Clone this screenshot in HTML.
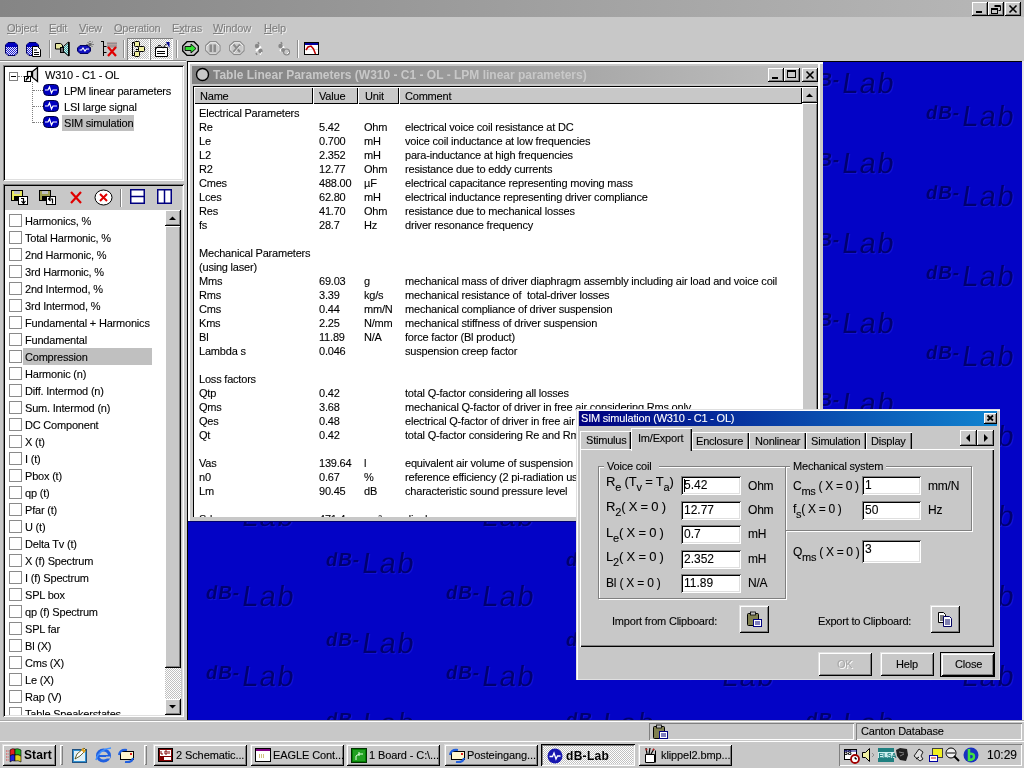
<!DOCTYPE html>
<html><head><meta charset="utf-8">
<style>
*{margin:0;padding:0;box-sizing:border-box}
html,body{width:1024px;height:768px;overflow:hidden;background:#c8c8c8;font-family:"Liberation Sans",sans-serif;font-size:11px;color:#000;letter-spacing:-0.2px}
.a{position:absolute}
.t{position:absolute;white-space:pre;line-height:14px;-webkit-text-stroke:0.1px currentColor}
.raised{background:#c0c0c0;border-top:1px solid #fff;border-left:1px solid #fff;border-right:1px solid #000;border-bottom:1px solid #000;box-shadow:inset -1px -1px 0 #808080}
.raised2{background:#c8c8c8;box-shadow:inset 1px 1px 0 #dfdfdf,inset -1px -1px 0 #000,inset 2px 2px 0 #fff,inset -2px -2px 0 #808080}
.sunk{box-shadow:inset 1px 1px 0 #808080,inset -1px -1px 0 #fff,inset 2px 2px 0 #000,inset -2px -2px 0 #dfdfdf}
.thin{box-shadow:inset 1px 1px 0 #808080,inset -1px -1px 0 #fff}
.tb{position:absolute;width:16px;height:14px;background:#c8c8c8;box-shadow:inset -1px -1px 0 #000,inset 1px 1px 0 #fff,inset -2px -2px 0 #808080}
.chk{position:absolute;width:13px;height:13px;border:1px solid #8a8a8a;background:#fff}
.dith{background-color:#fff;background-image:linear-gradient(45deg,#c0c0c0 25%,transparent 25%,transparent 75%,#c0c0c0 75%),linear-gradient(45deg,#c0c0c0 25%,transparent 25%,transparent 75%,#c0c0c0 75%);background-size:2px 2px;background-position:0 0,1px 1px}
</style></head><body><div id="root" style="position:absolute;left:0;top:0;width:1024px;height:768px;overflow:hidden;will-change:transform">

<!-- app title bar -->
<div class="a" style="left:0;top:0;width:1024px;height:17px;background:linear-gradient(90deg,#858585,#b8b8b8)"></div>

<!-- menu bar -->
<div class="a" id="menubar" style="left:0;top:17px;width:1024px;height:22px;background:#c8c8c8"></div>

<!-- toolbar -->
<div class="a" id="toolbar" style="left:0;top:39px;width:1024px;height:21px;background:#c8c8c8"></div>

<div class="t" style="left:7px;top:21px;color:#808080;text-shadow:1px 1px 0 #f0f0f0"><u>O</u>bject</div>
<div class="t" style="left:49px;top:21px;color:#808080;text-shadow:1px 1px 0 #f0f0f0"><u>E</u>dit</div>
<div class="t" style="left:79px;top:21px;color:#808080;text-shadow:1px 1px 0 #f0f0f0"><u>V</u>iew</div>
<div class="t" style="left:114px;top:21px;color:#808080;text-shadow:1px 1px 0 #f0f0f0"><u>O</u>peration</div>
<div class="t" style="left:172px;top:21px;color:#808080;text-shadow:1px 1px 0 #f0f0f0">E<u>x</u>tras</div>
<div class="t" style="left:213px;top:21px;color:#808080;text-shadow:1px 1px 0 #f0f0f0"><u>W</u>indow</div>
<div class="t" style="left:264px;top:21px;color:#808080;text-shadow:1px 1px 0 #f0f0f0"><u>H</u>elp</div>
<!-- app title buttons -->
<div class="tb" style="left:972px;top:2px;width:16px;height:14px"></div>
<div class="a" style="left:976px;top:11px;width:6px;height:2px;background:#000"></div>
<div class="tb" style="left:988px;top:2px;width:16px;height:14px"></div>
<svg class="a" style="left:988px;top:2px" width="16" height="14"><path d="M6.5 3.5h6v5h-2M6.5 4.5h6" stroke="#000" fill="none"/><rect x="3.5" y="6.5" width="6" height="5" fill="none" stroke="#000"/><path d="M3.5 7.5h6" stroke="#000"/></svg>
<div class="tb" style="left:1005px;top:2px;width:16px;height:14px"></div>
<svg class="a" style="left:1005px;top:2px" width="16" height="14"><path d="M4.5 3.5l7 7M11.5 3.5l-7 7" stroke="#000" stroke-width="1.6"/></svg>

<svg width="0" height="0" style="position:absolute"><defs>
<pattern id="dbl" patternUnits="userSpaceOnUse" width="2" height="2"><rect width="2" height="2" fill="#2020d0"/><rect width="1" height="1" fill="#e8e8ff"/><rect x="1" y="1" width="1" height="1" fill="#e8e8ff"/></pattern>
<pattern id="dtl" patternUnits="userSpaceOnUse" width="2" height="2"><rect width="2" height="2" fill="#40a0a0"/><rect width="1" height="1" fill="#d0f0f0"/><rect x="1" y="1" width="1" height="1" fill="#d0f0f0"/></pattern>
</defs></svg>
<svg class="a" style="left:5px;top:42px" width="13" height="14" viewBox="0 0 13 14"><path d="M3 0.5h7l2.5 2.5v8L10 13.5H3L0.5 11V3z" fill="url(#dbl)" stroke="#000060"/><path d="M3 1h7l2 2v2H1V3z" fill="#0000c0"/></svg>
<svg class="a" style="left:26px;top:42px" width="16" height="15" viewBox="0 0 16 15"><path d="M3 0.5h7l2.5 2.5v8L10 13.5H3L0.5 11V3z" fill="url(#dbl)" stroke="#000060"/><path d="M3 1h7l2 2v2H1V3z" fill="#0000c0"/><path d="M6.5 4.5h5l3 3v7h-8z" fill="#fff" stroke="#000"/><path d="M8 8h3M8 10.5h5M8 12.5h5" stroke="#000"/></svg>
<div class="a" style="left:49px;top:40px;width:1px;height:18px;background:#909090"></div><div class="a" style="left:50px;top:40px;width:1px;height:18px;background:#fff"></div>
<svg class="a" style="left:55px;top:41px" width="16" height="16" viewBox="0 0 16 16"><path d="M0.5 2.5h5l2 1.5v4h-7z" fill="#e8e8a0" stroke="#000"/><rect x="5.5" y="6.5" width="3" height="5" fill="#707070" stroke="#000"/><path d="M8.5 5.5l5-4.5v14l-5-4.5z" fill="url(#dtl)" stroke="#000"/><path d="M14 1v14" stroke="#000" stroke-width="1.5"/></svg>
<svg class="a" style="left:77px;top:41px" width="18" height="14" viewBox="0 0 18 14"><path d="M3 4.5h8l2.5 2.5v3L11 12.5H3L0.5 10V7z" fill="#1010c0" stroke="#000060"/><path d="M2.5 9h2l1.5-2 2 3 1.5-2h2.5" stroke="#fff" fill="none" stroke-width="1.1"/><path d="M13 0v7M9.5 3.5h7M10.5 1l5 5M15.5 1l-5 5" stroke="#000" stroke-width="0.7" stroke-dasharray="1 1"/></svg>
<svg class="a" style="left:101px;top:41px" width="17" height="16" viewBox="0 0 17 16"><path d="M2.5 0v15M0 0.5h3M2.5 5.5h3M2.5 11.5h3" stroke="#000"/><rect x="6" y="1" width="10" height="6" fill="#b8a0a0"/><path d="M6 2.5h10M6 5h10" stroke="#909090"/><path d="M7 6l8 9M15 6l-8 9" stroke="#e00000" stroke-width="2.2"/></svg>
<div class="a" style="left:123px;top:40px;width:1px;height:18px;background:#909090"></div><div class="a" style="left:124px;top:40px;width:1px;height:18px;background:#fff"></div>
<div class="a dith" style="left:127px;top:38px;width:23px;height:22px;box-shadow:inset 1px 1px 0 #808080,inset -1px -1px 0 #fff"></div>
<svg class="a" style="left:131px;top:41px" width="16" height="16" viewBox="0 0 16 16"><path d="M1.5 1v14M1.5 1.5h2M1.5 14.5h2M5 8.5h3" stroke="#000"/><rect x="3.5" y="0.5" width="5" height="5" rx="1" fill="#f0f0a0" stroke="#000"/><rect x="7.5" y="5.5" width="6" height="5" rx="1" fill="#f0f0a0" stroke="#000"/><rect x="3.5" y="10.5" width="5" height="5" rx="1" fill="#f0f0a0" stroke="#000"/></svg>
<div class="a dith" style="left:150px;top:38px;width:23px;height:22px;box-shadow:inset 1px 1px 0 #808080,inset -1px -1px 0 #fff"></div>
<svg class="a" style="left:154px;top:41px" width="16" height="16" viewBox="0 0 16 16"><path d="M1.5 6.5h12v9h-12z" fill="#fff" stroke="#000"/><path d="M3 10.5h8M3 12.5h8" stroke="#000"/><path d="M1.5 8l4-4 3 3 4-4" stroke="#000" fill="none" stroke-width="1.3" stroke-dasharray="1.3 0.7"/><path d="M12 1h3.5v6z" fill="#000090"/></svg>
<div class="a" style="left:176px;top:40px;width:1px;height:18px;background:#909090"></div><div class="a" style="left:177px;top:40px;width:1px;height:18px;background:#fff"></div>
<svg class="a" style="left:182px;top:41px" width="17" height="15" viewBox="0 0 17 15"><path d="M5 0.7h7l4.3 4.3v5L12 14.3H5L0.7 10V5z" fill="#c8c8c8" stroke="#000" stroke-width="1.3"/><path d="M3 5.5h6V3l5 4.5-5 4.5V9.5H3z" fill="#30e030" stroke="#000" stroke-width="0.9"/></svg>
<svg class="a" style="left:205px;top:41px" width="16" height="15" viewBox="0 0 16 15"><path d="M5 1.5h6l3.5 3.5v5L11 13.5H5L1.5 10V5z" fill="none" stroke="#fff" stroke-width="1.3"/><path d="M5 0.7h6l4 4v5L11 13.7H5L0.7 9.5v-5z" fill="none" stroke="#8a8a8a" stroke-width="1.2"/><rect x="4.5" y="3.5" width="2.5" height="7.5" fill="#8a8a8a"/><rect x="8.5" y="3.5" width="2.5" height="7.5" fill="#8a8a8a"/></svg>
<svg class="a" style="left:229px;top:41px" width="16" height="15" viewBox="0 0 16 15"><path d="M5 1.5h6l3.5 3.5v5L11 13.5H5L1.5 10V5z" fill="none" stroke="#fff" stroke-width="1.3"/><path d="M5 0.7h6l4 4v5L11 13.7H5L0.7 9.5v-5z" fill="none" stroke="#8a8a8a" stroke-width="1.2"/><path d="M4.5 3.5l6.5 7.5M11 3.5l-6.5 7.5" stroke="#8a8a8a" stroke-width="2"/><path d="M5 12l6-7" stroke="#fff" stroke-width="0.8"/></svg>
<svg class="a" style="left:253px;top:41px" width="12" height="15" viewBox="0 0 12 15"><path d="M8 5.5L3 10" stroke="#fff" stroke-width="2"/><circle cx="4" cy="5" r="2.2" fill="#888"/><circle cx="7.5" cy="10" r="2.2" fill="#888"/><path d="M5 1l1 2M3 12l1 2" stroke="#888" stroke-width="1.5"/><path d="M9 11l-2 3" stroke="#fff"/></svg>
<svg class="a" style="left:277px;top:41px" width="14" height="15" viewBox="0 0 14 15"><path d="M7 5.5L3 10" stroke="#fff" stroke-width="2"/><circle cx="3.5" cy="5" r="2.2" fill="#888"/><circle cx="6" cy="9" r="2" fill="#888"/><path d="M4 1l1 2" stroke="#888" stroke-width="1.5"/><circle cx="9.5" cy="11" r="3" fill="none" stroke="#888" stroke-width="1.2"/><path d="M10 13l2-2" stroke="#fff"/></svg>
<div class="a" style="left:297px;top:40px;width:1px;height:18px;background:#909090"></div><div class="a" style="left:298px;top:40px;width:1px;height:18px;background:#fff"></div>
<svg class="a" style="left:304px;top:42px" width="15" height="13" viewBox="0 0 15 13"><rect x="0.5" y="0.5" width="14" height="12" fill="#fff" stroke="#000"/><rect x="1" y="1" width="13" height="2" fill="#0000a0"/><path d="M1 7.5h13" stroke="#e0e0e0"/><path d="M2 8l2-3 3-1 2.5 3 2 5" stroke="#c00000" fill="none" stroke-width="1.5"/></svg>

<div class="a" style="left:0;top:60px;width:186px;height:1px;background:#808080"></div>
<div class="a" style="left:0;top:61px;width:186px;height:1px;background:#fff"></div>

<!-- left pane -->
<div class="a" id="leftpane" style="left:0;top:62px;width:187px;height:658px;background:#c8c8c8"></div>

<!-- tree view -->
<div class="a sunk" style="left:3px;top:65px;width:181px;height:116px;background:#fff"></div>
<div class="a" style="left:9px;top:72px;width:9px;height:9px;border:1px solid #808080;background:#fff"></div>
<div class="a" style="left:11px;top:76px;width:5px;height:1px;background:#000"></div>
<div class="a" style="left:18px;top:76px;width:6px;height:0;border-top:1px dotted #808080"></div>
<div class="a" style="left:32px;top:82px;width:0;height:41px;border-left:1px dotted #808080"></div>
<div class="a" style="left:33px;top:90px;width:10px;height:0;border-top:1px dotted #808080"></div>
<div class="a" style="left:33px;top:106px;width:10px;height:0;border-top:1px dotted #808080"></div>
<div class="a" style="left:33px;top:122px;width:10px;height:0;border-top:1px dotted #808080"></div>
<svg class="a" style="left:23px;top:67px" width="16" height="16" viewBox="0 0 16 16"><path d="M9.5 4.5l5-4v14l-5-4z" fill="#d8d8d8" stroke="#000" stroke-width="1.3"/><rect x="4.5" y="4.5" width="4" height="5" fill="#fff" stroke="#000" stroke-width="1.2"/><rect x="1.5" y="9.5" width="6" height="5" fill="#fff" stroke="#000"/><path d="M3 13.5q1-3 3-3" stroke="#000" fill="none" stroke-width="1.3"/></svg>
<div class="t" style="left:45px;top:68px">W310 - C1 - OL</div>
<svg class="a" style="left:43px;top:83px" width="16" height="14" viewBox="0 0 16 14"><rect x="0.5" y="1.5" width="15" height="11" rx="4" fill="#0000c0" stroke="#000040"/><path d="M2 7h3l1.5-3 2 6 1.5-3H14" stroke="#fff" fill="none" stroke-width="1.2"/></svg>
<div class="t" style="left:64px;top:84px">LPM linear parameters</div>
<svg class="a" style="left:43px;top:99px" width="16" height="14" viewBox="0 0 16 14"><rect x="0.5" y="1.5" width="15" height="11" rx="4" fill="#0000c0" stroke="#000040"/><path d="M2 7h3l1.5-3 2 6 1.5-3H14" stroke="#fff" fill="none" stroke-width="1.2"/></svg>
<div class="t" style="left:64px;top:100px">LSI large signal</div>
<svg class="a" style="left:43px;top:115px" width="16" height="14" viewBox="0 0 16 14"><rect x="0.5" y="1.5" width="15" height="11" rx="4" fill="#0000c0" stroke="#000040"/><path d="M2 7h3l1.5-3 2 6 1.5-3H14" stroke="#fff" fill="none" stroke-width="1.2"/></svg>
<div class="a" style="left:62px;top:115px;width:72px;height:16px;background:#c0c0c0"></div>
<div class="t" style="left:64px;top:116px">SIM simulation</div>

<!-- lower panel -->
<div class="a sunk" style="left:3px;top:184px;width:181px;height:533px;background:#c8c8c8"></div>
<!-- lower toolbar icons -->
<svg class="a" style="left:11px;top:190px" width="17" height="15" viewBox="0 0 17 15"><rect x="0.5" y="0.5" width="11" height="10" fill="#e8e860" stroke="#000"/><rect x="3" y="1" width="6" height="3" fill="#c0c0c0"/><rect x="3" y="6" width="6" height="4" fill="#000"/><rect x="7.5" y="6.5" width="9" height="8" fill="#fff" stroke="#000"/><path d="M10 8.5h2.5v4.5M10.5 11l2 2.5 2-2.5" stroke="#000" fill="none" stroke-width="1.2"/></svg>
<svg class="a" style="left:39px;top:190px" width="17" height="15" viewBox="0 0 17 15"><rect x="0.5" y="0.5" width="11" height="10" fill="#a0a050" stroke="#000"/><rect x="3" y="1" width="6" height="3" fill="#c0c0c0"/><rect x="3" y="6" width="6" height="4" fill="#000"/><rect x="7.5" y="6.5" width="9" height="8" fill="#fff" stroke="#000"/><path d="M13.5 13.5v-4.5h-3.5M11.5 7l-2 2 2 2" stroke="#000" fill="none" stroke-width="1.2"/></svg>
<svg class="a" style="left:69px;top:191px" width="14" height="13" viewBox="0 0 14 13"><path d="M2 1l10 11M12 1L2 12" stroke="#e00000" stroke-width="2.2"/></svg>
<svg class="a" style="left:94px;top:189px" width="19" height="17" viewBox="0 0 19 17"><ellipse cx="9.5" cy="8.5" rx="8.5" ry="7.5" fill="#fff" stroke="#000"/><path d="M6 5l7 7M13 5l-7 7" stroke="#e00000" stroke-width="2"/></svg>
<div class="a" style="left:120px;top:189px;width:1px;height:18px;background:#808080"></div>
<div class="a" style="left:121px;top:189px;width:1px;height:18px;background:#fff"></div>
<svg class="a" style="left:130px;top:189px" width="15" height="15" viewBox="0 0 15 15"><rect x="0.75" y="0.75" width="13.5" height="13.5" fill="#fff" stroke="#000080" stroke-width="1.5"/><path d="M1 7.5h13" stroke="#000080" stroke-width="1.5"/></svg>
<svg class="a" style="left:157px;top:189px" width="15" height="15" viewBox="0 0 15 15"><rect x="0.75" y="0.75" width="13.5" height="13.5" fill="#fff" stroke="#000080" stroke-width="1.5"/><path d="M7.5 1v13" stroke="#000080" stroke-width="1.5"/></svg>

<!-- list -->
<div class="a" style="left:5px;top:210px;width:160px;height:505px;background:#fff;overflow:hidden">
<div class="a" style="left:18px;top:138px;width:129px;height:17px;background:#c0c0c0"></div>
<div class="chk" style="left:4px;top:4px"></div><div class="t" style="left:20px;top:4px">Harmonics, %</div>
<div class="chk" style="left:4px;top:21px"></div><div class="t" style="left:20px;top:21px">Total Harmonic, %</div>
<div class="chk" style="left:4px;top:38px"></div><div class="t" style="left:20px;top:38px">2nd Harmonic, %</div>
<div class="chk" style="left:4px;top:55px"></div><div class="t" style="left:20px;top:55px">3rd Harmonic, %</div>
<div class="chk" style="left:4px;top:72px"></div><div class="t" style="left:20px;top:72px">2nd Intermod, %</div>
<div class="chk" style="left:4px;top:89px"></div><div class="t" style="left:20px;top:89px">3rd Intermod, %</div>
<div class="chk" style="left:4px;top:106px"></div><div class="t" style="left:20px;top:106px">Fundamental + Harmonics</div>
<div class="chk" style="left:4px;top:123px"></div><div class="t" style="left:20px;top:123px">Fundamental</div>
<div class="chk" style="left:4px;top:140px"></div><div class="t" style="left:20px;top:140px">Compression</div>
<div class="chk" style="left:4px;top:157px"></div><div class="t" style="left:20px;top:157px">Harmonic (n)</div>
<div class="chk" style="left:4px;top:174px"></div><div class="t" style="left:20px;top:174px">Diff. Intermod (n)</div>
<div class="chk" style="left:4px;top:191px"></div><div class="t" style="left:20px;top:191px">Sum. Intermod (n)</div>
<div class="chk" style="left:4px;top:208px"></div><div class="t" style="left:20px;top:208px">DC Component</div>
<div class="chk" style="left:4px;top:225px"></div><div class="t" style="left:20px;top:225px">X (t)</div>
<div class="chk" style="left:4px;top:242px"></div><div class="t" style="left:20px;top:242px">I (t)</div>
<div class="chk" style="left:4px;top:259px"></div><div class="t" style="left:20px;top:259px">Pbox (t)</div>
<div class="chk" style="left:4px;top:276px"></div><div class="t" style="left:20px;top:276px">qp (t)</div>
<div class="chk" style="left:4px;top:293px"></div><div class="t" style="left:20px;top:293px">Pfar (t)</div>
<div class="chk" style="left:4px;top:310px"></div><div class="t" style="left:20px;top:310px">U (t)</div>
<div class="chk" style="left:4px;top:327px"></div><div class="t" style="left:20px;top:327px">Delta Tv (t)</div>
<div class="chk" style="left:4px;top:344px"></div><div class="t" style="left:20px;top:344px">X (f) Spectrum</div>
<div class="chk" style="left:4px;top:361px"></div><div class="t" style="left:20px;top:361px">I (f) Spectrum</div>
<div class="chk" style="left:4px;top:378px"></div><div class="t" style="left:20px;top:378px">SPL box</div>
<div class="chk" style="left:4px;top:395px"></div><div class="t" style="left:20px;top:395px">qp (f) Spectrum</div>
<div class="chk" style="left:4px;top:412px"></div><div class="t" style="left:20px;top:412px">SPL far</div>
<div class="chk" style="left:4px;top:429px"></div><div class="t" style="left:20px;top:429px">Bl (X)</div>
<div class="chk" style="left:4px;top:446px"></div><div class="t" style="left:20px;top:446px">Cms (X)</div>
<div class="chk" style="left:4px;top:463px"></div><div class="t" style="left:20px;top:463px">Le (X)</div>
<div class="chk" style="left:4px;top:480px"></div><div class="t" style="left:20px;top:480px">Rap (V)</div>
<div class="chk" style="left:4px;top:497px"></div><div class="t" style="left:20px;top:497px">Table Speakerstates</div>
</div>
<!-- scrollbar -->
<div class="a" style="left:165px;top:210px;width:16px;height:505px;background:#c8c8c8"></div>
<div class="tb" style="left:165px;top:210px;width:16px;height:16px"></div>
<svg class="a" style="left:165px;top:210px" width="16" height="16"><path d="M4 10h7l-3.5-3.5z" fill="#000"/></svg>
<div class="tb" style="left:165px;top:226px;width:16px;height:442px"></div>
<div class="a dith" style="left:165px;top:668px;width:16px;height:31px"></div>
<div class="tb" style="left:165px;top:699px;width:16px;height:16px"></div>
<svg class="a" style="left:165px;top:699px" width="16" height="16"><path d="M4 6h7l-3.5 3.5z" fill="#000"/></svg>


<!-- MDI area -->
<svg class="a" style="left:186px;top:60px" width="838" height="660">
<defs><pattern id="wmp" patternUnits="userSpaceOnUse" x="2" y="2" width="240" height="80"><g font-family="Liberation Sans"><g fill="#1010d8"><g transform="translate(18,58) skewX(-9)"><text x="0" y="0" font-size="19" font-weight="bold" letter-spacing="0.8">dB-</text></g><g transform="translate(138,25) skewX(-9)"><text x="0" y="0" font-size="19" font-weight="bold" letter-spacing="0.8">dB-</text></g><g transform="translate(54,64.5) skewX(-9)"><text x="0" y="0" font-size="29" letter-spacing="1.5">Lab</text></g><g transform="translate(174,31.5) skewX(-9)"><text x="0" y="0" font-size="29" letter-spacing="1.5">Lab</text></g></g><g fill="#000070"><g transform="translate(17,57) skewX(-9)"><text x="0" y="0" font-size="19" font-weight="bold" letter-spacing="0.8">dB-</text></g><g transform="translate(137,24) skewX(-9)"><text x="0" y="0" font-size="19" font-weight="bold" letter-spacing="0.8">dB-</text></g><g transform="translate(53,63.5) skewX(-9)"><text x="0" y="0" font-size="29" letter-spacing="1.5">Lab</text></g><g transform="translate(173,30.5) skewX(-9)"><text x="0" y="0" font-size="29" letter-spacing="1.5">Lab</text></g></g></g></pattern></defs>
<rect x="0" y="0" width="838" height="660" fill="#c8c8c8"/><rect x="2" y="2" width="836" height="658" fill="#0303c6"/>
<rect x="2" y="2" width="836" height="658" fill="url(#wmp)"/>
<rect x="1" y="1" width="836" height="1" fill="#000"/><rect x="1" y="1" width="1" height="659" fill="#000"/>
<rect x="836" y="1" width="2" height="659" fill="#e8e8e8"/>
</svg>
<!-- Table window -->
<div class="a" style="left:188px;top:521px;width:635px;height:1px;background:#000070"></div>
<div class="a" style="left:188px;top:62px;width:635px;height:459px;background:#c8c8c8;box-shadow:inset 2px 2px 0 #fff, inset -3px 0 0 #c8c8c8, inset -5px 0 0 #fff"></div>
<div class="a" style="left:192px;top:66px;width:626px;height:18px;background:linear-gradient(90deg,#808080,#c0c0c0)"></div>
<svg class="a" style="left:195px;top:67px" width="15" height="15"><circle cx="7.5" cy="7.5" r="6" fill="#c8c8c8" stroke="#000" stroke-width="1.4"/></svg>
<div class="t" style="left:213px;top:68px;font-weight:bold;-webkit-text-stroke:0;font-size:12px;letter-spacing:0;color:#c8c8c8">Table Linear Parameters (W310 - C1 - OL - LPM linear parameters)</div>
<div class="tb" style="left:768px;top:68px;width:16px;height:14px"></div>
<div class="a" style="left:772px;top:77px;width:6px;height:2px;background:#000"></div>
<div class="tb" style="left:784px;top:68px;width:16px;height:14px"></div>
<div class="a" style="left:787px;top:70px;width:9px;height:8px;border:1px solid #000;border-top-width:2px"></div>
<div class="tb" style="left:802px;top:68px;width:16px;height:14px"></div>
<svg class="a" style="left:802px;top:68px" width="16" height="14"><path d="M4.5 3.5l7 7M11.5 3.5l-7 7" stroke="#000" stroke-width="1.6"/></svg>
<!-- list view -->
<div class="a" style="left:193px;top:86px;width:625px;height:431px;background:#fff;border-left:1px solid #000;border-top:1px solid #000"></div>
<!-- header -->
<div class="a" style="left:194px;top:87px;width:119px;height:17px;background:#c8c8c8;box-shadow:inset 1px 1px 0 #fff,inset -1px -1px 0 #000"></div>
<div class="a" style="left:313px;top:87px;width:45px;height:17px;background:#c8c8c8;box-shadow:inset 1px 1px 0 #fff,inset -1px -1px 0 #000"></div>
<div class="a" style="left:358px;top:87px;width:41px;height:17px;background:#c8c8c8;box-shadow:inset 1px 1px 0 #fff,inset -1px -1px 0 #000"></div>
<div class="a" style="left:399px;top:87px;width:403px;height:17px;background:#c8c8c8;box-shadow:inset 1px 1px 0 #fff,inset -1px -1px 0 #000"></div>
<div class="t" style="left:200px;top:89px">Name</div>
<div class="t" style="left:319px;top:89px">Value</div>
<div class="t" style="left:365px;top:89px">Unit</div>
<div class="t" style="left:405px;top:89px">Comment</div>
<div class="a" style="left:194px;top:104px;width:608px;height:413px;overflow:hidden">
<div class="a" style="left:-194px;top:-104px;width:1024px;height:768px">
<div class="t" style="left:199px;top:106px">Electrical Parameters</div>
<div class="t" style="left:199px;top:120px">Re</div>
<div class="t" style="left:319px;top:120px">5.42</div>
<div class="t" style="left:364px;top:120px">Ohm</div>
<div class="t" style="left:405px;top:120px">electrical voice coil resistance at DC</div>
<div class="t" style="left:199px;top:134px">Le</div>
<div class="t" style="left:319px;top:134px">0.700</div>
<div class="t" style="left:364px;top:134px">mH</div>
<div class="t" style="left:405px;top:134px">voice coil inductance at low frequencies</div>
<div class="t" style="left:199px;top:148px">L2</div>
<div class="t" style="left:319px;top:148px">2.352</div>
<div class="t" style="left:364px;top:148px">mH</div>
<div class="t" style="left:405px;top:148px">para-inductance at high frequencies</div>
<div class="t" style="left:199px;top:162px">R2</div>
<div class="t" style="left:319px;top:162px">12.77</div>
<div class="t" style="left:364px;top:162px">Ohm</div>
<div class="t" style="left:405px;top:162px">resistance due to eddy currents</div>
<div class="t" style="left:199px;top:176px">Cmes</div>
<div class="t" style="left:319px;top:176px">488.00</div>
<div class="t" style="left:364px;top:176px">µF</div>
<div class="t" style="left:405px;top:176px">electrical capacitance representing moving mass</div>
<div class="t" style="left:199px;top:190px">Lces</div>
<div class="t" style="left:319px;top:190px">62.80</div>
<div class="t" style="left:364px;top:190px">mH</div>
<div class="t" style="left:405px;top:190px">electrical inductance representing driver compliance</div>
<div class="t" style="left:199px;top:204px">Res</div>
<div class="t" style="left:319px;top:204px">41.70</div>
<div class="t" style="left:364px;top:204px">Ohm</div>
<div class="t" style="left:405px;top:204px">resistance due to mechanical losses</div>
<div class="t" style="left:199px;top:218px">fs</div>
<div class="t" style="left:319px;top:218px">28.7</div>
<div class="t" style="left:364px;top:218px">Hz</div>
<div class="t" style="left:405px;top:218px">driver resonance frequency</div>
<div class="t" style="left:199px;top:246px">Mechanical Parameters</div>
<div class="t" style="left:199px;top:260px">(using laser)</div>
<div class="t" style="left:199px;top:274px">Mms</div>
<div class="t" style="left:319px;top:274px">69.03</div>
<div class="t" style="left:364px;top:274px">g</div>
<div class="t" style="left:405px;top:274px">mechanical mass of driver diaphragm assembly including air load and voice coil</div>
<div class="t" style="left:199px;top:288px">Rms</div>
<div class="t" style="left:319px;top:288px">3.39</div>
<div class="t" style="left:364px;top:288px">kg/s</div>
<div class="t" style="left:405px;top:288px">mechanical resistance of  total-driver losses</div>
<div class="t" style="left:199px;top:302px">Cms</div>
<div class="t" style="left:319px;top:302px">0.44</div>
<div class="t" style="left:364px;top:302px">mm/N</div>
<div class="t" style="left:405px;top:302px">mechanical compliance of driver suspension</div>
<div class="t" style="left:199px;top:316px">Kms</div>
<div class="t" style="left:319px;top:316px">2.25</div>
<div class="t" style="left:364px;top:316px">N/mm</div>
<div class="t" style="left:405px;top:316px">mechanical stiffness of driver suspension</div>
<div class="t" style="left:199px;top:330px">Bl</div>
<div class="t" style="left:319px;top:330px">11.89</div>
<div class="t" style="left:364px;top:330px">N/A</div>
<div class="t" style="left:405px;top:330px">force factor (Bl product)</div>
<div class="t" style="left:199px;top:344px">Lambda s</div>
<div class="t" style="left:319px;top:344px">0.046</div>
<div class="t" style="left:405px;top:344px">suspension creep factor</div>
<div class="t" style="left:199px;top:372px">Loss factors</div>
<div class="t" style="left:199px;top:386px">Qtp</div>
<div class="t" style="left:319px;top:386px">0.42</div>
<div class="t" style="left:405px;top:386px">total Q-factor considering all losses</div>
<div class="t" style="left:199px;top:400px">Qms</div>
<div class="t" style="left:319px;top:400px">3.68</div>
<div class="t" style="left:405px;top:400px">mechanical Q-factor of driver in free air considering Rms only</div>
<div class="t" style="left:199px;top:414px">Qes</div>
<div class="t" style="left:319px;top:414px">0.48</div>
<div class="t" style="left:405px;top:414px">electrical Q-factor of driver in free air considering Re only</div>
<div class="t" style="left:199px;top:428px">Qt</div>
<div class="t" style="left:319px;top:428px">0.42</div>
<div class="t" style="left:405px;top:428px">total Q-factor considering Re and Rms only</div>
<div class="t" style="left:199px;top:456px">Vas</div>
<div class="t" style="left:319px;top:456px">139.64</div>
<div class="t" style="left:364px;top:456px">l</div>
<div class="t" style="left:405px;top:456px">equivalent air volume of suspension</div>
<div class="t" style="left:199px;top:470px">n0</div>
<div class="t" style="left:319px;top:470px">0.67</div>
<div class="t" style="left:364px;top:470px">%</div>
<div class="t" style="left:405px;top:470px">reference efficiency (2 pi-radiation using Vd)</div>
<div class="t" style="left:199px;top:484px">Lm</div>
<div class="t" style="left:319px;top:484px">90.45</div>
<div class="t" style="left:364px;top:484px">dB</div>
<div class="t" style="left:405px;top:484px">characteristic sound pressure level</div>
<div class="t" style="left:199px;top:512px">Sd</div>
<div class="t" style="left:319px;top:512px">471.4</div>
<div class="t" style="left:364px;top:512px">cm²</div>
<div class="t" style="left:405px;top:512px">diaphragm area</div>
</div></div>
<!-- scrollbar -->
<div class="tb" style="left:802px;top:87px;width:16px;height:16px"></div>
<svg class="a" style="left:802px;top:87px" width="16" height="16"><path d="M4 10h7l-3.5-3.5z" fill="#000"/></svg>
<div class="tb" style="left:802px;top:103px;width:16px;height:414px"></div>



<!-- SIM dialog -->
<div class="a" style="left:576px;top:409px;width:424px;height:271px;background:#c8c8c8;box-shadow:inset 1px 1px 0 #dfdfdf,inset 2px 2px 0 #fff,inset -1px -1px 0 #e0e0e0"></div>
<div class="a" style="left:579px;top:411px;width:418px;height:15px;background:linear-gradient(90deg,#000080,#1084d0)"></div>
<div class="t" style="left:581px;top:411px;color:#fff">SIM simulation (W310 - C1 - OL)</div>
<div class="tb" style="left:984px;top:413px;width:13px;height:11px"></div>
<svg class="a" style="left:984px;top:413px" width="13" height="11"><path d="M3.5 2.5l5.5 5M9 2.5l-5.5 5" stroke="#000" stroke-width="1.8"/></svg>
<!-- tabs -->
<div class="a" style="left:580px;top:431px;width:51px;height:19px;background:#c8c8c8;box-shadow:inset 1px 1px 0 #fff,inset -1px 0 0 #000,inset -2px 0 0 #808080"></div>
<div class="t" style="left:586px;top:433px">Stimulus</div>
<div class="a" style="left:692px;top:432px;width:57px;height:18px;background:#c8c8c8;box-shadow:inset 1px 1px 0 #fff,inset -1px 0 0 #000,inset -2px 0 0 #808080"></div>
<div class="t" style="left:696px;top:434px">Enclosure</div>
<div class="a" style="left:749px;top:432px;width:57px;height:18px;background:#c8c8c8;box-shadow:inset 1px 1px 0 #fff,inset -1px 0 0 #000,inset -2px 0 0 #808080"></div>
<div class="t" style="left:755px;top:434px">Nonlinear</div>
<div class="a" style="left:806px;top:432px;width:60px;height:18px;background:#c8c8c8;box-shadow:inset 1px 1px 0 #fff,inset -1px 0 0 #000,inset -2px 0 0 #808080"></div>
<div class="t" style="left:811px;top:434px">Simulation</div>
<div class="a" style="left:866px;top:432px;width:46px;height:18px;background:#c8c8c8;box-shadow:inset 1px 1px 0 #fff,inset -1px 0 0 #000,inset -2px 0 0 #808080"></div>
<div class="t" style="left:871px;top:434px">Display</div>
<!-- panel -->
<div class="a" style="left:580px;top:449px;width:414px;height:198px;background:#c8c8c8;box-shadow:inset 1px 1px 0 #fff,inset -1px -1px 0 #000,inset -2px -2px 0 #808080"></div>
<div class="a" style="left:631px;top:428px;width:61px;height:23px;background:#c8c8c8;box-shadow:inset 1px 1px 0 #fff,inset -1px 0 0 #000,inset -2px 0 0 #808080"></div>
<div class="t" style="left:638px;top:431px">Im/Export</div>
<!-- tab scroll -->
<div class="tb" style="left:960px;top:430px;width:17px;height:16px"></div>
<svg class="a" style="left:960px;top:430px" width="17" height="16"><path d="M10 4v8l-4-4z" fill="#000"/></svg>
<div class="tb" style="left:977px;top:430px;width:17px;height:16px"></div>
<svg class="a" style="left:977px;top:430px" width="17" height="16"><path d="M7 4v8l4-4z" fill="#000"/></svg>
<!-- group voice coil -->
<div class="a" style="left:598px;top:466px;width:188px;height:133px;border:1px solid #808080;box-shadow:inset 1px 1px 0 #fff,1px 1px 0 #fff"></div>
<div class="a" style="left:604px;top:459px;width:55px;height:14px;background:#c8c8c8"></div>
<div class="t" style="left:607px;top:459px">Voice coil</div>
<div class="t" style="left:606px;top:475px;font-size:13px">R<span style="font-size:11px;position:relative;top:5px">e</span> (T<span style="font-size:11px;position:relative;top:5px">v</span> = T<span style="font-size:11px;position:relative;top:5px">a</span>)</div>
<div class="t" style="left:606px;top:500px;font-size:13px">R<span style="font-size:11px;position:relative;top:5px">2</span>( X = 0 )</div>
<div class="t" style="left:606px;top:526px;font-size:13px">L<span style="font-size:11px;position:relative;top:5px">e</span>( X = 0 )</div>
<div class="t" style="left:606px;top:550px;font-size:13px">L<span style="font-size:11px;position:relative;top:5px">2</span>( X = 0 )</div>
<div class="t" style="left:606px;top:576px;font-size:12px">Bl ( X = 0 )</div>
<div class="a" style="left:681px;top:476px;width:60px;height:19px;background:#fff;box-shadow:inset 1px 1px 0 #808080,inset -1px -1px 0 #fff,inset 2px 2px 0 #000,inset -2px -2px 0 #dfdfdf"></div><div class="t" style="left:684px;top:478px;font-size:12px;letter-spacing:0">5.42</div><div class="a" style="left:684px;top:479px;width:1px;height:13px;background:#000"></div>
<div class="a" style="left:681px;top:501px;width:60px;height:19px;background:#fff;box-shadow:inset 1px 1px 0 #808080,inset -1px -1px 0 #fff,inset 2px 2px 0 #000,inset -2px -2px 0 #dfdfdf"></div><div class="t" style="left:684px;top:503px;font-size:12px;letter-spacing:0">12.77</div>
<div class="a" style="left:681px;top:525px;width:60px;height:19px;background:#fff;box-shadow:inset 1px 1px 0 #808080,inset -1px -1px 0 #fff,inset 2px 2px 0 #000,inset -2px -2px 0 #dfdfdf"></div><div class="t" style="left:684px;top:527px;font-size:12px;letter-spacing:0">0.7</div>
<div class="a" style="left:681px;top:550px;width:60px;height:19px;background:#fff;box-shadow:inset 1px 1px 0 #808080,inset -1px -1px 0 #fff,inset 2px 2px 0 #000,inset -2px -2px 0 #dfdfdf"></div><div class="t" style="left:684px;top:552px;font-size:12px;letter-spacing:0">2.352</div>
<div class="a" style="left:681px;top:574px;width:60px;height:19px;background:#fff;box-shadow:inset 1px 1px 0 #808080,inset -1px -1px 0 #fff,inset 2px 2px 0 #000,inset -2px -2px 0 #dfdfdf"></div><div class="t" style="left:684px;top:576px;font-size:12px;letter-spacing:0">11.89</div>
<div class="t" style="left:748px;top:479px;font-size:12px">Ohm</div>
<div class="t" style="left:748px;top:503px;font-size:12px">Ohm</div>
<div class="t" style="left:748px;top:527px;font-size:12px">mH</div>
<div class="t" style="left:748px;top:552px;font-size:12px">mH</div>
<div class="t" style="left:748px;top:576px;font-size:12px">N/A</div>
<!-- group mech -->
<div class="a" style="left:785px;top:466px;width:187px;height:65px;border:1px solid #808080;box-shadow:inset 1px 1px 0 #fff,1px 1px 0 #fff"></div>
<div class="a" style="left:790px;top:459px;width:96px;height:14px;background:#c8c8c8"></div>
<div class="t" style="left:793px;top:459px">Mechanical system</div>
<div class="t" style="left:793px;top:479px;font-size:12px;letter-spacing:-0.3px">C<span style="font-size:11px;position:relative;top:5px">ms</span> ( X = 0 )</div>
<div class="t" style="left:793px;top:502px;font-size:12px;letter-spacing:-0.3px">f<span style="font-size:11px;position:relative;top:5px">s</span>( X = 0 )</div>
<div class="a" style="left:862px;top:476px;width:59px;height:19px;background:#fff;box-shadow:inset 1px 1px 0 #808080,inset -1px -1px 0 #fff,inset 2px 2px 0 #000,inset -2px -2px 0 #dfdfdf"></div><div class="t" style="left:865px;top:478px;font-size:12px;letter-spacing:0">1</div>
<div class="a" style="left:862px;top:501px;width:59px;height:19px;background:#fff;box-shadow:inset 1px 1px 0 #808080,inset -1px -1px 0 #fff,inset 2px 2px 0 #000,inset -2px -2px 0 #dfdfdf"></div><div class="t" style="left:865px;top:503px;font-size:12px;letter-spacing:0">50</div>
<div class="t" style="left:928px;top:479px;font-size:12px">mm/N</div>
<div class="t" style="left:928px;top:503px;font-size:12px">Hz</div>
<div class="t" style="left:793px;top:545px;font-size:12px;letter-spacing:-0.3px">Q<span style="font-size:11px;position:relative;top:5px">ms</span> ( X = 0 )</div>
<div class="a" style="left:862px;top:540px;width:59px;height:23px;background:#fff;box-shadow:inset 1px 1px 0 #808080,inset -1px -1px 0 #fff,inset 2px 2px 0 #000,inset -2px -2px 0 #dfdfdf"></div><div class="t" style="left:865px;top:542px;font-size:12px;letter-spacing:0">3</div>
<!-- clipboard -->
<div class="t" style="left:612px;top:614px">Import from Clipboard:</div>
<div class="a raised2" style="left:739px;top:605px;width:30px;height:28px"></div>
<svg class="a" style="left:746px;top:611px" width="16" height="16" viewBox="0 0 16 16"><rect x="1.5" y="2.5" width="11" height="12" rx="1" fill="#808050" stroke="#000"/><rect x="4.5" y="1" width="5" height="3" fill="#c0c0c0" stroke="#000" stroke-width="0.8"/><rect x="7.5" y="8.5" width="8" height="7" fill="#fff" stroke="#000080"/><path d="M9 11h5M9 13h5" stroke="#000080"/></svg>
<div class="t" style="left:818px;top:614px">Export to Clipboard:</div>
<div class="a raised2" style="left:930px;top:605px;width:30px;height:28px"></div>
<svg class="a" style="left:937px;top:611px" width="16" height="16" viewBox="0 0 16 16"><path d="M1.5 1.5h5l2 2v8h-7z" fill="#fff" stroke="#000"/><path d="M3 5h4M3 7h4M3 9h4" stroke="#000"/><path d="M6.5 5.5h6l2 2v8h-8z" fill="#fff" stroke="#000060"/><path d="M8 9h5M8 11h5M8 13h5" stroke="#000060"/></svg>
<!-- buttons -->
<div class="a raised2" style="left:818px;top:652px;width:54px;height:24px"></div>
<div class="t" style="left:837px;top:657px;color:#a8a8a8;text-shadow:1px 1px 0 #fff">OK</div>
<div class="a raised2" style="left:880px;top:652px;width:54px;height:24px"></div>
<div class="t" style="left:896px;top:657px">Help</div>
<div class="a raised2" style="left:940px;top:652px;width:55px;height:25px;border:1px solid #000"></div>
<div class="t" style="left:955px;top:657px">Close</div>

<!-- status bar -->
<div class="a" id="status" style="left:0;top:720px;width:1024px;height:21px;background:#c8c8c8"></div>
<div class="a" style="left:0;top:720px;width:1024px;height:1px;background:#a8a8a8"></div><div class="a" style="left:0;top:721px;width:1024px;height:1px;background:#fff"></div>
<div class="a" style="left:649px;top:723px;width:205px;height:17px;box-shadow:inset 1px 1px 0 #808080,inset -1px -1px 0 #fff"></div>
<svg class="a" style="left:652px;top:724px" width="16" height="15" viewBox="0 0 16 15"><rect x="1.5" y="2.5" width="11" height="12" rx="1" fill="#808050" stroke="#000"/><rect x="4.5" y="1" width="5" height="3" fill="#c0c0c0" stroke="#000" stroke-width="0.8"/><rect x="7.5" y="7.5" width="8" height="7" fill="#fff" stroke="#000080"/><path d="M9 10h5M9 12h5" stroke="#000080"/></svg>
<div class="a" style="left:856px;top:723px;width:166px;height:17px;box-shadow:inset 1px 1px 0 #808080,inset -1px -1px 0 #fff"></div>
<div class="t" style="left:861px;top:724px">Canton Database</div>


<!-- taskbar -->
<div class="a" id="taskbar" style="left:0;top:741px;width:1024px;height:27px;background:#c8c8c8;border-top:1px solid #fff"></div>
<div class="a raised2" style="left:2px;top:744px;width:54px;height:22px"></div>
<svg class="a" style="left:5px;top:747px" width="18" height="16" viewBox="0 0 18 16"><path d="M1 4h3M1 7h3M1 10h3M1 13h3" stroke="#e04040" stroke-width="1" stroke-dasharray="1 0.6"/><path d="M5 3q2-2 5-1v6q-3-1-5 1z" fill="#e02020" stroke="#000" stroke-width="0.6"/><path d="M10 2q3-1 6 1v6q-3-2-6-1z" fill="#20b020" stroke="#000" stroke-width="0.6"/><path d="M5 9q2-2 5-1v6q-3-1-5 1z" fill="#2020e0" stroke="#000" stroke-width="0.6"/><path d="M10 8q3-1 6 1v6q-3-2-6-1z" fill="#e0d020" stroke="#000" stroke-width="0.6"/></svg>
<div class="t" style="left:24px;top:748px;font-weight:bold;-webkit-text-stroke:0;font-size:12px;letter-spacing:0.1px">Start</div>
<div class="a" style="left:60px;top:745px;width:3px;height:20px;box-shadow:inset 1px 1px 0 #fff,inset -1px -1px 0 #808080"></div>
<svg class="a" style="left:72px;top:747px" width="16" height="16" viewBox="0 0 16 16"><rect x="0.5" y="2.5" width="14" height="13" fill="#3090d0" stroke="#205080"/><rect x="2" y="4" width="11" height="10" fill="#e0f0f8"/><path d="M3 12l2-5 7-6 2 2-6 6z" fill="#fff" stroke="#404000" stroke-width="0.8"/><path d="M10 2l3 3" stroke="#e0a020" stroke-width="2.5"/></svg>
<svg class="a" style="left:95px;top:747px" width="17" height="16" viewBox="0 0 17 16"><ellipse cx="8.5" cy="8.5" rx="6" ry="5.5" fill="none" stroke="#2060e0" stroke-width="3"/><path d="M4 9h9" stroke="#2060e0" stroke-width="2"/><rect x="11" y="9.5" width="4" height="2" fill="#c8c8c8"/><path d="M1 13q3-11 15-12" stroke="#4090ff" fill="none" stroke-width="1.5"/></svg>
<svg class="a" style="left:118px;top:747px" width="16" height="16" viewBox="0 0 16 16"><rect x="2.5" y="4.5" width="13" height="8" fill="#fff8d0" stroke="#000"/><rect x="12" y="6" width="2" height="2" fill="#e02020"/><path d="M1 8q1-6 8-5" stroke="#2060e0" fill="none" stroke-width="2.2"/><path d="M15 11q-1 5-8 4" stroke="#2060e0" fill="none" stroke-width="2.2"/></svg>
<div class="a" style="left:144px;top:745px;width:3px;height:20px;box-shadow:inset 1px 1px 0 #fff,inset -1px -1px 0 #808080"></div>
<div class="a raised2" style="left:153px;top:744px;width:94px;height:22px"></div>
<svg class="a" style="left:158px;top:747px" width="16" height="16"><rect x="0.5" y="1.5" width="14" height="13" fill="#800000" stroke="#000"/><rect x="2" y="3" width="11" height="6" fill="#fff"/><path d="M3 4v3h2M7 4h2v3H7zM11 4v3" stroke="#800000" fill="none"/><rect x="6" y="10" width="7" height="3" fill="#fff"/></svg>
<div class="t" style="left:176px;top:748px;font-size:11px;letter-spacing:-0.1px">2 Schematic...</div>
<div class="a raised2" style="left:250px;top:744px;width:94px;height:22px"></div>
<svg class="a" style="left:255px;top:747px" width="16" height="16"><rect x="0.5" y="1.5" width="15" height="13" fill="#fff" stroke="#000"/><rect x="1" y="2" width="14" height="2" fill="#800080"/><path d="M4 8h1M6 8h1M8 8h1M4 10h1M6 10h1M8 10h1" stroke="#a08000"/></svg>
<div class="t" style="left:273px;top:748px;font-size:11px;letter-spacing:-0.1px">EAGLE Cont...</div>
<div class="a raised2" style="left:346px;top:744px;width:94px;height:22px"></div>
<svg class="a" style="left:351px;top:747px" width="16" height="16"><rect x="0.5" y="1.5" width="15" height="14" fill="#008000" stroke="#003000"/><rect x="2" y="3" width="12" height="11" fill="#20a020"/><path d="M5 13v-4l3-2h4M8 5v4" stroke="#e0ffe0" fill="none"/></svg>
<div class="t" style="left:369px;top:748px;font-size:11px;letter-spacing:-0.1px">1 Board - C:\...</div>
<div class="a raised2" style="left:444px;top:744px;width:94px;height:22px"></div>
<svg class="a" style="left:449px;top:747px" width="16" height="16"><rect x="2.5" y="4.5" width="13" height="8" fill="#fff8d0" stroke="#000"/><rect x="12" y="6" width="2" height="2" fill="#e02020"/><path d="M1 8q1-6 8-5" stroke="#2060e0" fill="none" stroke-width="2.2"/><path d="M15 11q-1 5-8 4" stroke="#2060e0" fill="none" stroke-width="2.2"/></svg>
<div class="t" style="left:467px;top:748px;font-size:11px;letter-spacing:-0.1px">Posteingang...</div>
<div class="a dith" style="left:541px;top:744px;width:94px;height:22px;box-shadow:inset 1px 1px 0 #000,inset -1px -1px 0 #fff,inset 2px 2px 0 #808080,inset -2px -2px 0 #dfdfdf"></div>
<svg class="a" style="left:547px;top:748px" width="16" height="16"><circle cx="8" cy="8" r="7.5" fill="#1818b0"/><path d="M2.5 8.5h3l1.5-3.5 2 6 1.5-3h3" stroke="#fff" fill="none" stroke-width="1.3"/></svg>
<div class="t" style="left:566px;top:749px;font-weight:bold;-webkit-text-stroke:0;font-size:12px;letter-spacing:0.3px">dB-Lab</div>
<div class="a raised2" style="left:638px;top:744px;width:94px;height:22px"></div>
<svg class="a" style="left:643px;top:747px" width="16" height="16"><path d="M2.5 7.5h9v8h-9z" fill="#fff" stroke="#000"/><path d="M4 7l-1-6M6 7l1-6M8 7l3-5" stroke="#000" stroke-width="1.2"/><path d="M3 2l1 1M10 2l1 1" stroke="#c02020" stroke-width="2"/><path d="M12.5 3.5v12" stroke="#000"/></svg>
<div class="t" style="left:661px;top:748px;font-size:11px;letter-spacing:-0.1px">klippel2.bmp...</div>
<div class="a" style="left:839px;top:744px;width:183px;height:22px;box-shadow:inset 1px 1px 0 #808080,inset -1px -1px 0 #fff"></div>
<svg class="a" style="left:843px;top:746px" width="140" height="18">
<rect x="1.5" y="3.5" width="12" height="10" fill="#fff" stroke="#000"/><text x="1" y="9" font-size="7" font-family="Liberation Sans" font-weight="bold">38</text><path d="M1 5h13" stroke="#000080"/><circle cx="12" cy="13" r="4" fill="#fff" stroke="#a00000" stroke-width="1.8"/><path d="M12 11v2h2" stroke="#000" stroke-width="0.8"/>
<path d="M19.5 6.5h3l4-4v13l-4-4h-3z" fill="#f0f0a0" stroke="#000"/><path d="M29 7l2 2-2 2" stroke="#909090" fill="none"/>
<rect x="35" y="2" width="16" height="14" fill="#208080"/><rect x="35" y="6" width="16" height="6" fill="#d0f0f0"/><text x="35.5" y="11.5" font-size="7" fill="#208080" font-family="Liberation Sans" font-weight="bold">ELSA</text>
<path d="M53 4l4-2 7 1 1 6-2 6-6-1-3-4z" fill="#202020"/><path d="M56 6l5 1M57 10l4-2" stroke="#808080"/>
<path d="M71 10l5-7 4 3-2 4 2 3-3 2z" fill="#e0e0e0" stroke="#202020"/><path d="M73 13l3-2" stroke="#000"/>
<rect x="89.5" y="2.5" width="10" height="9" fill="#f0f020" stroke="#404040"/><rect x="86.5" y="9.5" width="8" height="6" fill="#fff" stroke="#0000a0"/><path d="M88 12h5" stroke="#c02020"/>
<circle cx="108" cy="7" r="5" fill="#f0f0f0" stroke="#000"/><path d="M104 7h8" stroke="#000"/><path d="M111 10l5 5" stroke="#000" stroke-width="2"/>
<circle cx="128" cy="9" r="7.5" fill="#1830c0"/><path d="M126 3v11q5 0 5-3.5t-5-2.5" stroke="#40e040" fill="none" stroke-width="2.5"/>
</svg>
<div class="t" style="left:987px;top:748px;font-size:12px;letter-spacing:0">10:29</div>


</div></body></html>
